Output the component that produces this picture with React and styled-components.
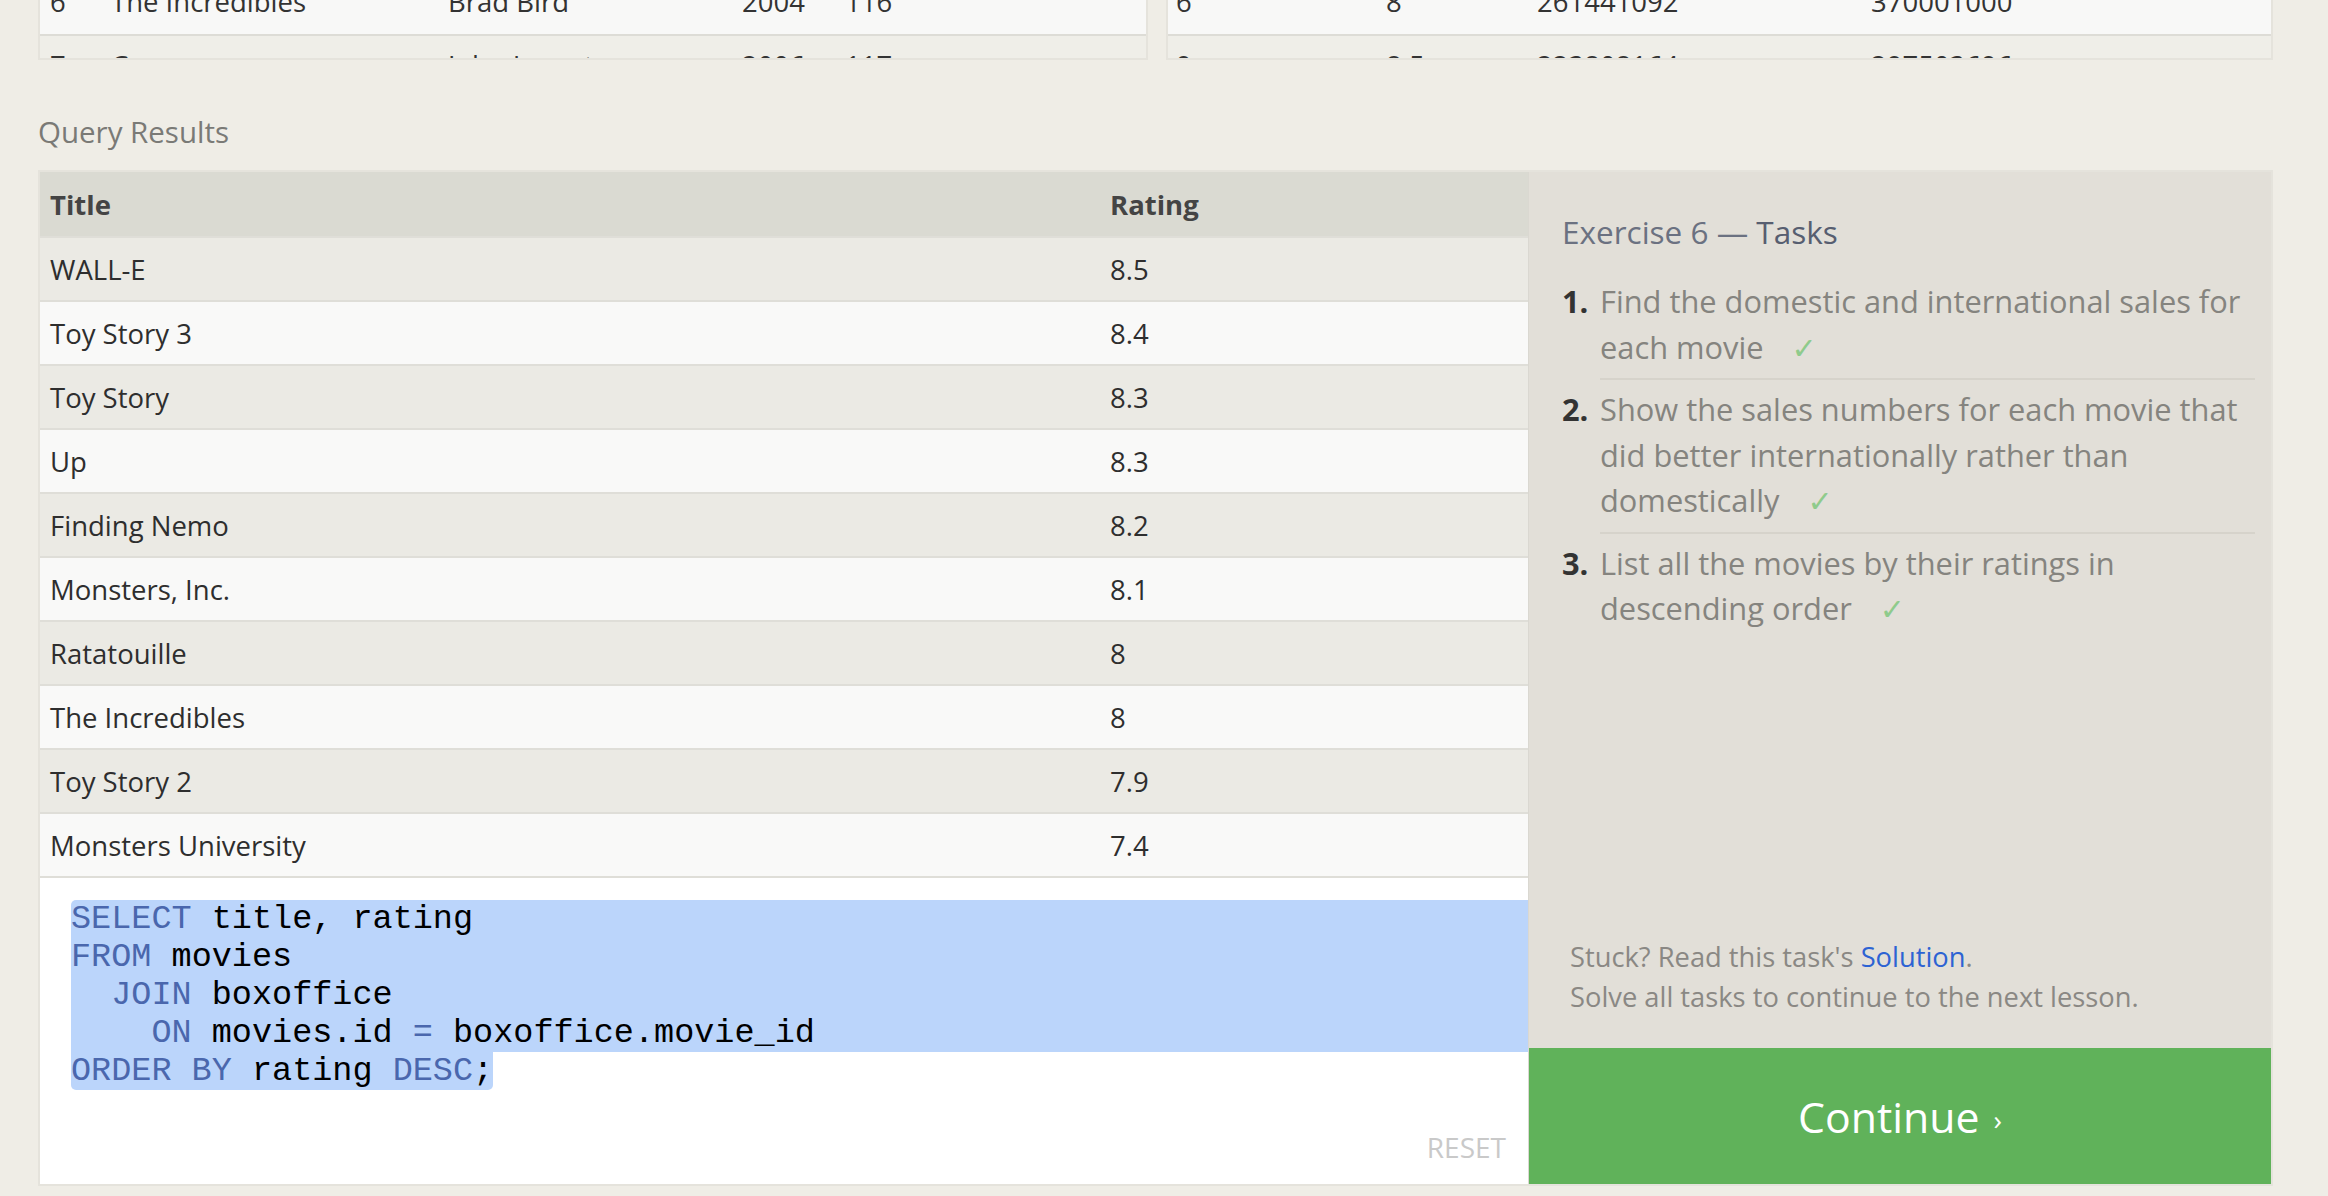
import React, { useLayoutEffect, useRef } from "react";
import styled, { createGlobalStyle } from "styled-components";

const Global = createGlobalStyle`
  html, body { margin: 0; padding: 0; background: #efede6; }
  body {
    font-family: "Open Sans", Lato, "DejaVu Sans", sans-serif;
    width: 2328px;
    height: 1196px;
    overflow: hidden;
  }
  * { box-sizing: border-box; }
`;

const Page = styled.div`
  width: 2235px;
  margin-left: 38px;
`;

const TopRow = styled.div`
  display: grid;
  grid-template-columns: 1110px 1107px;
  column-gap: 18px;
`;

const PreviewBox = styled.div`
  height: 60px;
  overflow: hidden;
  border: 2px solid #e5e3dc;
  border-top: none;
`;

const PreviewRow = styled.div`
  display: grid;
  grid-template-columns: ${(p) => p.$cols};
  padding-left: ${(p) => p.$pad}px;
  padding-bottom: 4px;
  height: 64px;
  align-items: center;
  background: ${(p) => (p.$alt ? "#efeee8" : "#f8f8f7")};
  border-bottom: 2px solid #dddcd6;
  font-size: 27.5px;
  color: #333;
`;

const SectionLabel = styled.div`
  margin: 54px 0 20px;
  font-size: 29.5px;
  line-height: 36px;
  color: #7a7a76;
`;

const Panel = styled.div`
  display: grid;
  grid-template-columns: 1489px 1fr;
  border: 2px solid #e5e3dc;
`;

const LeftPane = styled.div`
  display: flex;
  flex-direction: column;
  border-right: 1px solid #dad8d1;
`;

const Table = styled.div`
  display: flex;
  flex-direction: column;
`;

const Row = styled.div`
  display: grid;
  grid-template-columns: 1060px 1fr;
  height: ${(p) => (p.$head ? 66 : 64)}px;
  align-items: center;
  background: ${(p) => (p.$head ? "#dadad2" : p.$alt ? "#ebeae4" : "#f9f9f8")};
  border-bottom: 2px solid #dfded8;
  font-size: 27.5px;
  font-weight: ${(p) => (p.$head ? 700 : 400)};
  color: ${(p) => (p.$head ? "#444" : "#2e2e2e")};
`;

const Cell = styled.div`
  padding-left: 10px;
`;

const Editor = styled.div`
  height: 306px;
  background: #fff;
  display: flex;
  flex-direction: column;
  padding: 22px 0 22px 31px;
`;

const Code = styled.div`
  flex: 1;
  font-family: "Liberation Mono", "DejaVu Sans Mono", monospace;
  font-size: 33.5px;
  line-height: 38px;
  color: #000;
  white-space: pre;
`;

const CodeLine = styled.div`
  display: ${(p) => (p.$partial ? "table" : "block")};
  background: #bbd5fb;
  border-top-left-radius: ${(p) => (p.$first ? 5 : 0)}px;
  border-bottom-left-radius: ${(p) => (p.$partial ? 5 : 0)}px;
  border-bottom-right-radius: ${(p) => (p.$partial ? 5 : 0)}px;
`;

const Kw = styled.span`
  color: #4a67ad;
`;

const Reset = styled.div`
  align-self: flex-end;
  margin-right: 22px;
  font-size: 28px;
  line-height: 30px;
  color: #c9c9c9;
`;

const Sidebar = styled.div`
  background: #e2dfd8;
  display: flex;
  flex-direction: column;
`;

const SideBody = styled.div`
  flex: 1;
  padding: 40px 16px 0 33px;
`;

const Heading = styled.div`
  font-size: 31.5px;
  line-height: 40px;
  color: #6b7181;
`;

const HeadStrong = styled.span`
  color: #575e70;
`;

const TaskList = styled.ol`
  list-style: none;
  margin: 20px 0 0;
  padding: 0;
`;

const Task = styled.li`
  display: grid;
  grid-template-columns: 38px 1fr;
  font-size: 30.8px;
  line-height: 45.5px;
`;

const TaskNum = styled.span`
  padding-top: 7px;
  font-weight: 700;
  color: #333;
`;

const TaskText = styled.div`
  padding: 7px 0 7px;
  color: #85847f;
  white-space: nowrap;
  border-bottom: ${(p) => (p.$last ? "none" : "2px solid #d6d3cb")};
`;

const Check = styled.span`
  margin-left: 28px;
  color: #8fcb8c;
  font-family: "DejaVu Sans", sans-serif;
  font-size: 30px;
`;

const Stuck = styled.div`
  padding: 0 16px 31px 41px;
  font-size: 27.3px;
  line-height: 40px;
  color: #8a8884;
`;

const Link = styled.a`
  color: #2d63d3;
  text-decoration: none;
`;

const Continue = styled.div`
  height: 136px;
  background: #60b25a;
  color: #fff;
  font-size: 42.8px;
  display: flex;
  align-items: center;
  justify-content: center;
`;

const Chevron = styled.span`
  font-size: 28px;
  margin-left: 14px;
  padding-top: 6px;
`;

const movies = [
  ["6", "The Incredibles", "Brad Bird", "2004", "116"],
  ["7", "Cars", "John Lasseter", "2006", "117"],
];
const box = [
  ["6", "8", "261441092", "370001000"],
  ["9", "8.5", "223808164", "297503696"],
];

const results = [
  ["WALL-E", "8.5"],
  ["Toy Story 3", "8.4"],
  ["Toy Story", "8.3"],
  ["Up", "8.3"],
  ["Finding Nemo", "8.2"],
  ["Monsters, Inc.", "8.1"],
  ["Ratatouille", "8"],
  ["The Incredibles", "8"],
  ["Toy Story 2", "7.9"],
  ["Monsters University", "7.4"],
];

function Preview({ rows, cols, pad }) {
  const ref = useRef(null);
  useLayoutEffect(() => {
    if (ref.current) ref.current.scrollTop = 28;
  }, []);
  return (
    <PreviewBox ref={ref}>
      {rows.map((r, i) => (
        <PreviewRow key={i} $cols={cols} $pad={pad} $alt={i % 2 === 1}>
          {r.map((c, j) => (
            <span key={j}>{c}</span>
          ))}
        </PreviewRow>
      ))}
    </PreviewBox>
  );
}

export default function App() {
  return (
    <>
      <Global />
      <Page>
        <TopRow>
          <Preview rows={movies} cols="61px 337px 294px 103px 1fr" pad={10} />
          <Preview rows={box} cols="210px 151px 334px 1fr" pad={8} />
        </TopRow>
        <SectionLabel>Query Results</SectionLabel>
        <Panel>
          <LeftPane>
            <Table>
              <Row $head>
                <Cell>Title</Cell>
                <Cell>Rating</Cell>
              </Row>
              {results.map(([t, r], i) => (
                <Row key={t} $alt={i % 2 === 0}>
                  <Cell>{t}</Cell>
                  <Cell>{r}</Cell>
                </Row>
              ))}
            </Table>
            <Editor>
              <Code>
                <CodeLine $first>
                  <Kw>SELECT</Kw> title, rating
                </CodeLine>
                <CodeLine>
                  <Kw>FROM</Kw> movies
                </CodeLine>
                <CodeLine>
                  {"  "}
                  <Kw>JOIN</Kw> boxoffice
                </CodeLine>
                <CodeLine>
                  {"    "}
                  <Kw>ON</Kw> movies.id <Kw>=</Kw> boxoffice.movie_id
                </CodeLine>
                <CodeLine $partial>
                  <Kw>ORDER BY</Kw> rating <Kw>DESC</Kw>;
                </CodeLine>
              </Code>
              <Reset>RESET</Reset>
            </Editor>
          </LeftPane>
          <Sidebar>
            <SideBody>
              <Heading>
                Exercise 6 — <HeadStrong>Tasks</HeadStrong>
              </Heading>
              <TaskList>
                <Task>
                  <TaskNum>1.</TaskNum>
                  <TaskText>
                    Find the domestic and international sales for
                    <br />
                    each movie<Check>✓</Check>
                  </TaskText>
                </Task>
                <Task>
                  <TaskNum>2.</TaskNum>
                  <TaskText>
                    Show the sales numbers for each movie that
                    <br />
                    did better internationally rather than
                    <br />
                    domestically<Check>✓</Check>
                  </TaskText>
                </Task>
                <Task>
                  <TaskNum>3.</TaskNum>
                  <TaskText $last>
                    List all the movies by their ratings in
                    <br />
                    descending order<Check>✓</Check>
                  </TaskText>
                </Task>
              </TaskList>
            </SideBody>
            <Stuck>
              Stuck? Read this task's <Link href="#">Solution</Link>.
              <br />
              Solve all tasks to continue to the next lesson.
            </Stuck>
            <Continue>
              Continue<Chevron>›</Chevron>
            </Continue>
          </Sidebar>
        </Panel>
      </Page>
    </>
  );
}
